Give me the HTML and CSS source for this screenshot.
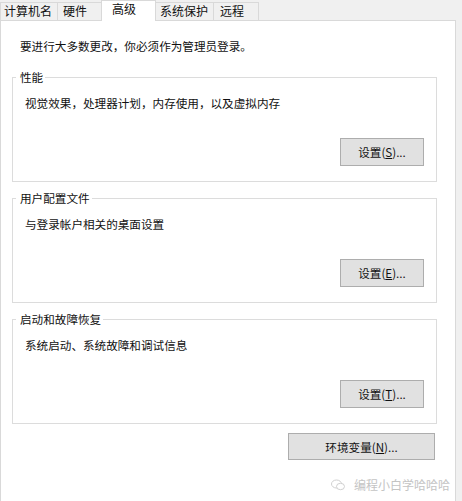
FILE: index.html
```html
<!DOCTYPE html>
<html lang="zh-CN">
  <head>
    <meta charset="UTF-8" />
    <meta name="viewport" content="width=device-width, initial-scale=1.0" />
    <title>系统属性</title>
    <link rel="stylesheet" href="styles.css">
  </head>
  <body>
    <div class="dialog">
      <!-- Tab strip -->
      <div class="tabs">
        <div class="tab tab-first">计算机名</div>
        <div class="tab tab-hw">硬件</div>
        <div class="tab active">高级</div>
        <div class="tab tab-protect">系统保护</div>
        <div class="tab tab-remote">远程</div>
      </div>

      <div class="panel">
        <p class="intro">要进行大多数更改，你必须作为管理员登录。</p>

        <fieldset class="group">
          <legend>性能</legend>
          <p class="group-desc">视觉效果，处理器计划，内存使用，以及虚拟内存</p>
          <div class="group-actions">
            <button class="btn">设置(<u>S</u>)...</button>
          </div>
        </fieldset>

        <fieldset class="group">
          <legend>用户配置文件</legend>
          <p class="group-desc">与登录帐户相关的桌面设置</p>
          <div class="group-actions">
            <button class="btn">设置(<u>E</u>)...</button>
          </div>
        </fieldset>

        <fieldset class="group">
          <legend>启动和故障恢复</legend>
          <p class="group-desc">系统启动、系统故障和调试信息</p>
          <div class="group-actions">
            <button class="btn">设置(<u>T</u>)...</button>
          </div>
        </fieldset>

        <div class="env-row">
          <button class="btn btn-env">环境变量(<u>N</u>)...</button>
        </div>
      </div>
    </div>

    <!-- watermark over the corner -->
    <div class="watermark">
      <svg width="14" height="12" viewBox="0 0 14 12">
        <ellipse cx="5.5" cy="5" rx="5" ry="4" fill="none" stroke="#d0d0d0" stroke-width="1" />
        <ellipse cx="9.5" cy="7.5" rx="4" ry="3.2" fill="#fff" stroke="#d0d0d0" stroke-width="1" />
      </svg>
      <span>编程小白学哈哈哈</span>
    </div>
  </body>
</html>
```

FILE: styles.css
```css
html,
body {
  overflow: hidden;
}

body {
  margin: 0;
  background-color: #f0f0f0;
  font-family: "Noto Sans CJK SC", "Noto Sans", sans-serif;
  font-size: 11.6px;
  line-height: 16px;
  color: #111;
}

.dialog {
  width: 456px;
}

.tabs {
  display: flex;
  height: 20px;
}

.tab {
  position: relative;
  box-sizing: border-box;
  height: 18px;
  margin-top: 2px;
  margin-right: -1px;
  padding-left: 5px;
  border: 1px solid #d9d9d9;
  border-bottom: none;
  background-color: #f0f0f0;
  font-size: 12px;
  line-height: 16px;
}

.tab-first {
  width: 58px;
  padding-left: 3px;
}

.tab-hw {
  width: 47px;
}

.tab-protect {
  width: 59px;
  padding-left: 4px;
}

.tab-remote {
  width: 46px;
  padding-left: 6px;
}

.tab.active {
  z-index: 1;
  width: 55px;
  height: 21px;
  margin-top: 0;
  margin-left: -2px;
  margin-right: -1px;
  padding-left: 10px;
  background-color: #fff;
  line-height: 15px;
}

.panel {
  box-sizing: border-box;
  height: 481px;
  padding: 17px 18px 0 11px;
  border: 1px solid #d9d9d9;
  border-bottom: none;
  background-color: #fff;
}

.intro {
  margin: 0 0 15px 8px;
}

.group {
  margin: 0 0 8px 0;
  padding: 10px 12px 15px 12px;
  border: 1px solid #dcdcdc;
  min-inline-size: 0;
}

.group legend {
  margin-left: -9px;
  padding: 0 2px 0 4px;
  line-height: 16px;
}

.group-desc {
  margin: 0;
}

.group-actions {
  display: flex;
  justify-content: flex-end;
  margin-top: 27px;
}

.btn {
  box-sizing: border-box;
  width: 84px;
  height: 28px;
  padding: 0;
  border: 1px solid #adadad;
  background-color: #e1e1e1;
  font-family: inherit;
  font-size: 11.6px;
  color: #111;
}

.env-row {
  display: flex;
  justify-content: flex-end;
  margin-top: 9px;
  padding-right: 2px;
}

.btn-env {
  width: 147px;
  height: 27px;
}

.watermark {
  position: absolute;
  left: 331px;
  top: 477px;
  display: flex;
  align-items: center;
  gap: 9px;
  color: #c4c4c4;
  font-size: 12px;
}
```
